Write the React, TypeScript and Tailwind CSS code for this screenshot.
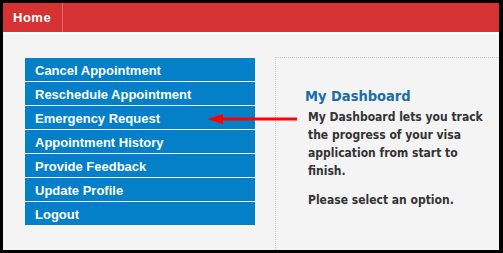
const menuItems = [
  "Cancel Appointment",
  "Reschedule Appointment",
  "Emergency Request",
  "Appointment History",
  "Provide Feedback",
  "Update Profile",
  "Logout",
]

function Arrow() {
  return (
    <svg className="absolute left-[205px] top-[109px]" width="95" height="20" viewBox="0 0 95 20">
      <line x1="16" y1="10" x2="92" y2="10" stroke="#ff0000" strokeWidth="3" />
      <polygon points="2,10 18,5 18,15" fill="#ff0000" />
    </svg>
  )
}

export default function App() {
  return (
    <div className="relative w-[503px] h-[253px] bg-black pt-[3px] pl-[3px] pr-[4px] pb-[3px] overflow-hidden">
      <div className="flex flex-col w-full h-full bg-[#f4f4f4]">
        <div className="flex h-[29px] bg-[#d63133] border-b-2 border-white box-content">
          <div className="flex items-center w-[60px] border-r border-[#e8686a] pl-[10px] text-white text-[13px] font-bold tracking-[0.5px] font-['Liberation_Sans',Arial,sans-serif]">
            Home
          </div>
        </div>
        <div className="flex flex-1 pt-[23px] pl-[22px]">
          <ul className="w-[230px] mt-px font-['Liberation_Sans',Arial,sans-serif]">
            {menuItems.map((item) => (
              <li
                key={item}
                className="h-[24px] bg-[#0380c7] border-b border-white last:border-b-0 last:h-[23px] pl-[10px] pt-[3px] text-white text-[13px] font-bold leading-[20px]"
              >
                {item}
              </li>
            ))}
          </ul>
          <div className="flex-1 ml-[20px] border-l border-t border-dotted border-[#c8c8c8] pl-[29px] pt-[29px] font-['DejaVu_Sans_Condensed','DejaVu_Sans',Verdana,sans-serif] [font-stretch:condensed]">
            <h2 className="text-[#1b6ca8] text-[14.5px] font-bold leading-[18px]">My Dashboard</h2>
            <div className="w-[180px] pl-[3px] mt-[3px] text-[#333] text-[12px] font-bold leading-[18px]">
              <p>My Dashboard lets you track the progress of your visa application from start to finish.</p>
              <p className="mt-[11px]">Please select an option.</p>
            </div>
          </div>
        </div>
      </div>
      <Arrow />
    </div>
  )
}
